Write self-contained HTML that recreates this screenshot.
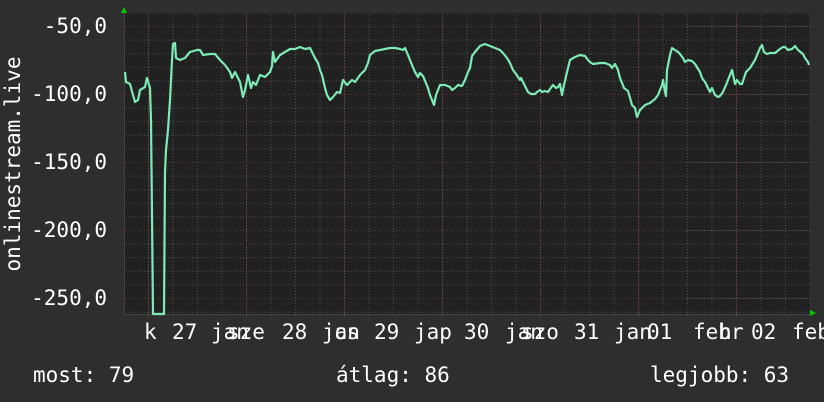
<!DOCTYPE html>
<html><head><meta charset="utf-8"><style>
html,body{margin:0;padding:0;background:#2e2e2e;}
svg{display:block}
text{font-family:"DejaVu Sans Mono","Liberation Mono",monospace;font-size:21px;fill:#ffffff}
</style></head><body>
<svg width="824" height="402" viewBox="0 0 824 402" xmlns="http://www.w3.org/2000/svg">
<defs>
<pattern id="ph" patternUnits="userSpaceOnUse" x="0" y="26" width="686" height="13.6">
<line x1="0" x2="686" y1="0.5" y2="0.5" stroke="#505050" stroke-dasharray="1,2"/>
</pattern>
<pattern id="pv" patternUnits="userSpaceOnUse" x="148" y="0" width="24.5" height="400">
<line y1="0" y2="400" x1="0.5" x2="0.5" stroke="#505050" stroke-dasharray="1,2"/>
</pattern>
</defs>
<rect width="824" height="402" fill="#2e2e2e"/>
<rect x="124" y="13" width="686" height="301" fill="#212121"/>
<rect x="124" y="13" width="686" height="301" fill="url(#ph)"/>
<rect x="124" y="13" width="686" height="304" fill="url(#pv)"/>
<g stroke="#6b2f2f" stroke-dasharray="1,2">
<line x1="120" x2="814" y1="26.5" y2="26.5"/>
<line x1="120" x2="814" y1="94.5" y2="94.5"/>
<line x1="120" x2="814" y1="162.5" y2="162.5"/>
<line x1="120" x2="814" y1="230.5" y2="230.5"/>
<line x1="120" x2="814" y1="298.5" y2="298.5"/>
<line y1="13" y2="317" x1="148.5" x2="148.5"/>
<line y1="13" y2="317" x1="246.5" x2="246.5"/>
<line y1="13" y2="317" x1="344.5" x2="344.5"/>
<line y1="13" y2="317" x1="442.5" x2="442.5"/>
<line y1="13" y2="317" x1="540.5" x2="540.5"/>
<line y1="13" y2="317" x1="638.5" x2="638.5"/>
<line y1="13" y2="317" x1="736.5" x2="736.5"/>
</g>
<line x1="124" y1="314.5" x2="810" y2="314.5" stroke="#444"/>
<line x1="124.5" y1="13" x2="124.5" y2="314" stroke="#444"/>
<polygon points="121,13 127,13 124,7" fill="#00cc00"/>
<polygon points="810,310 810,316 816,313" fill="#00cc00"/>
<polyline fill="none" stroke="#7cebb4" stroke-width="2.2" stroke-linejoin="round" points="
125,72 126,82 130,84 133,95 135,102 138,100 140,90 145,87 147,78 150,88 151,120 152,215 153,314 164,314 165,172 166,150 168,130 170,100 172,60 173,44 175,43 176,58 180,60 185,58 190,52 197,50 200,50 203,55 210,54 215,54 220,60 225,65 230,72 232,78 235,72 240,82 243,97 245,90 248,75 251,88 253,82 256,85 260,75 265,77 270,72 272,66 273,52 275,62 280,55 285,52 290,49 295,49 300,47 305,49 310,48 315,58 318,63 320,70 322,75 325,88 327,95 330,100 333,97 337,92 340,93 343,80 347,85 352,80 355,82 360,75 365,70 368,63 370,55 375,51 380,50 385,49 390,48 395,48 400,49 403,50 405,48 408,55 412,65 415,72 418,77 420,73 423,76 428,88 430,95 432,100 434,105 436,95 440,85 445,85 450,87 452,90 455,88 458,85 462,86 465,80 468,72 470,68 472,56 475,52 480,46 485,44 490,46 495,48 500,50 503,53 507,58 510,63 513,70 516,74 520,80 521,78 523,82 526,88 528,92 531,94 535,94 537,92 540,90 542,92 545,91 548,92 550,89 553,85 556,88 558,87 560,84 562,95 564,85 568,68 570,60 575,57 580,55 585,56 588,60 590,62 593,64 600,63 605,63 610,65 612,68 615,64 618,70 620,78 624,88 628,91 632,105 635,108 637,117 640,110 642,108 645,105 650,103 655,99 658,95 660,90 662,85 663,80 665,92 666,96 667,70 670,55 672,48 675,50 678,52 680,54 683,58 685,62 688,60 692,61 695,64 700,72 702,78 705,82 708,88 710,92 712,88 715,95 718,97 720,96 723,92 726,85 728,80 732,70 735,84 737,80 740,84 742,84 746,72 750,68 755,60 760,48 762,45 764,52 767,54 770,53 775,53 780,49 783,47 785,47 788,50 792,49 795,46 798,50 803,54 805,58 808,62 809,65"/>
<g text-anchor="end">
<text x="107" y="33">-50,0</text>
<text x="107" y="101">-100,0</text>
<text x="107" y="169">-150,0</text>
<text x="107" y="237">-200,0</text>
<text x="107" y="305">-250,0</text>
</g>
<text transform="translate(20,164) rotate(-90)" text-anchor="middle">onlinestream.live</text>
<g>
<text x="144" y="339">k</text>
<text x="172" y="339">27</text>
<text x="211" y="339">jan</text>
<text x="227" y="339">sze</text>
<text x="282" y="339">28</text>
<text x="322" y="339">jan</text>
<text x="334" y="339">cs</text>
<text x="374" y="339">29</text>
<text x="414" y="339">jap</text>
<text x="464" y="339">30</text>
<text x="505" y="339">jan</text>
<text x="521" y="339">szo</text>
<text x="574" y="339">31</text>
<text x="614" y="339">jan</text>
<text x="647" y="339">01</text>
<text x="693" y="339">febr</text>
<text x="719" y="339">h</text>
<text x="751" y="339">02</text>
<text x="792" y="339">feb</text>
</g>
<text x="33" y="382">most: 79</text>
<text x="336" y="382">átlag: 86</text>
<text x="650" y="382">legjobb: 63</text>
</svg>
</body></html>
